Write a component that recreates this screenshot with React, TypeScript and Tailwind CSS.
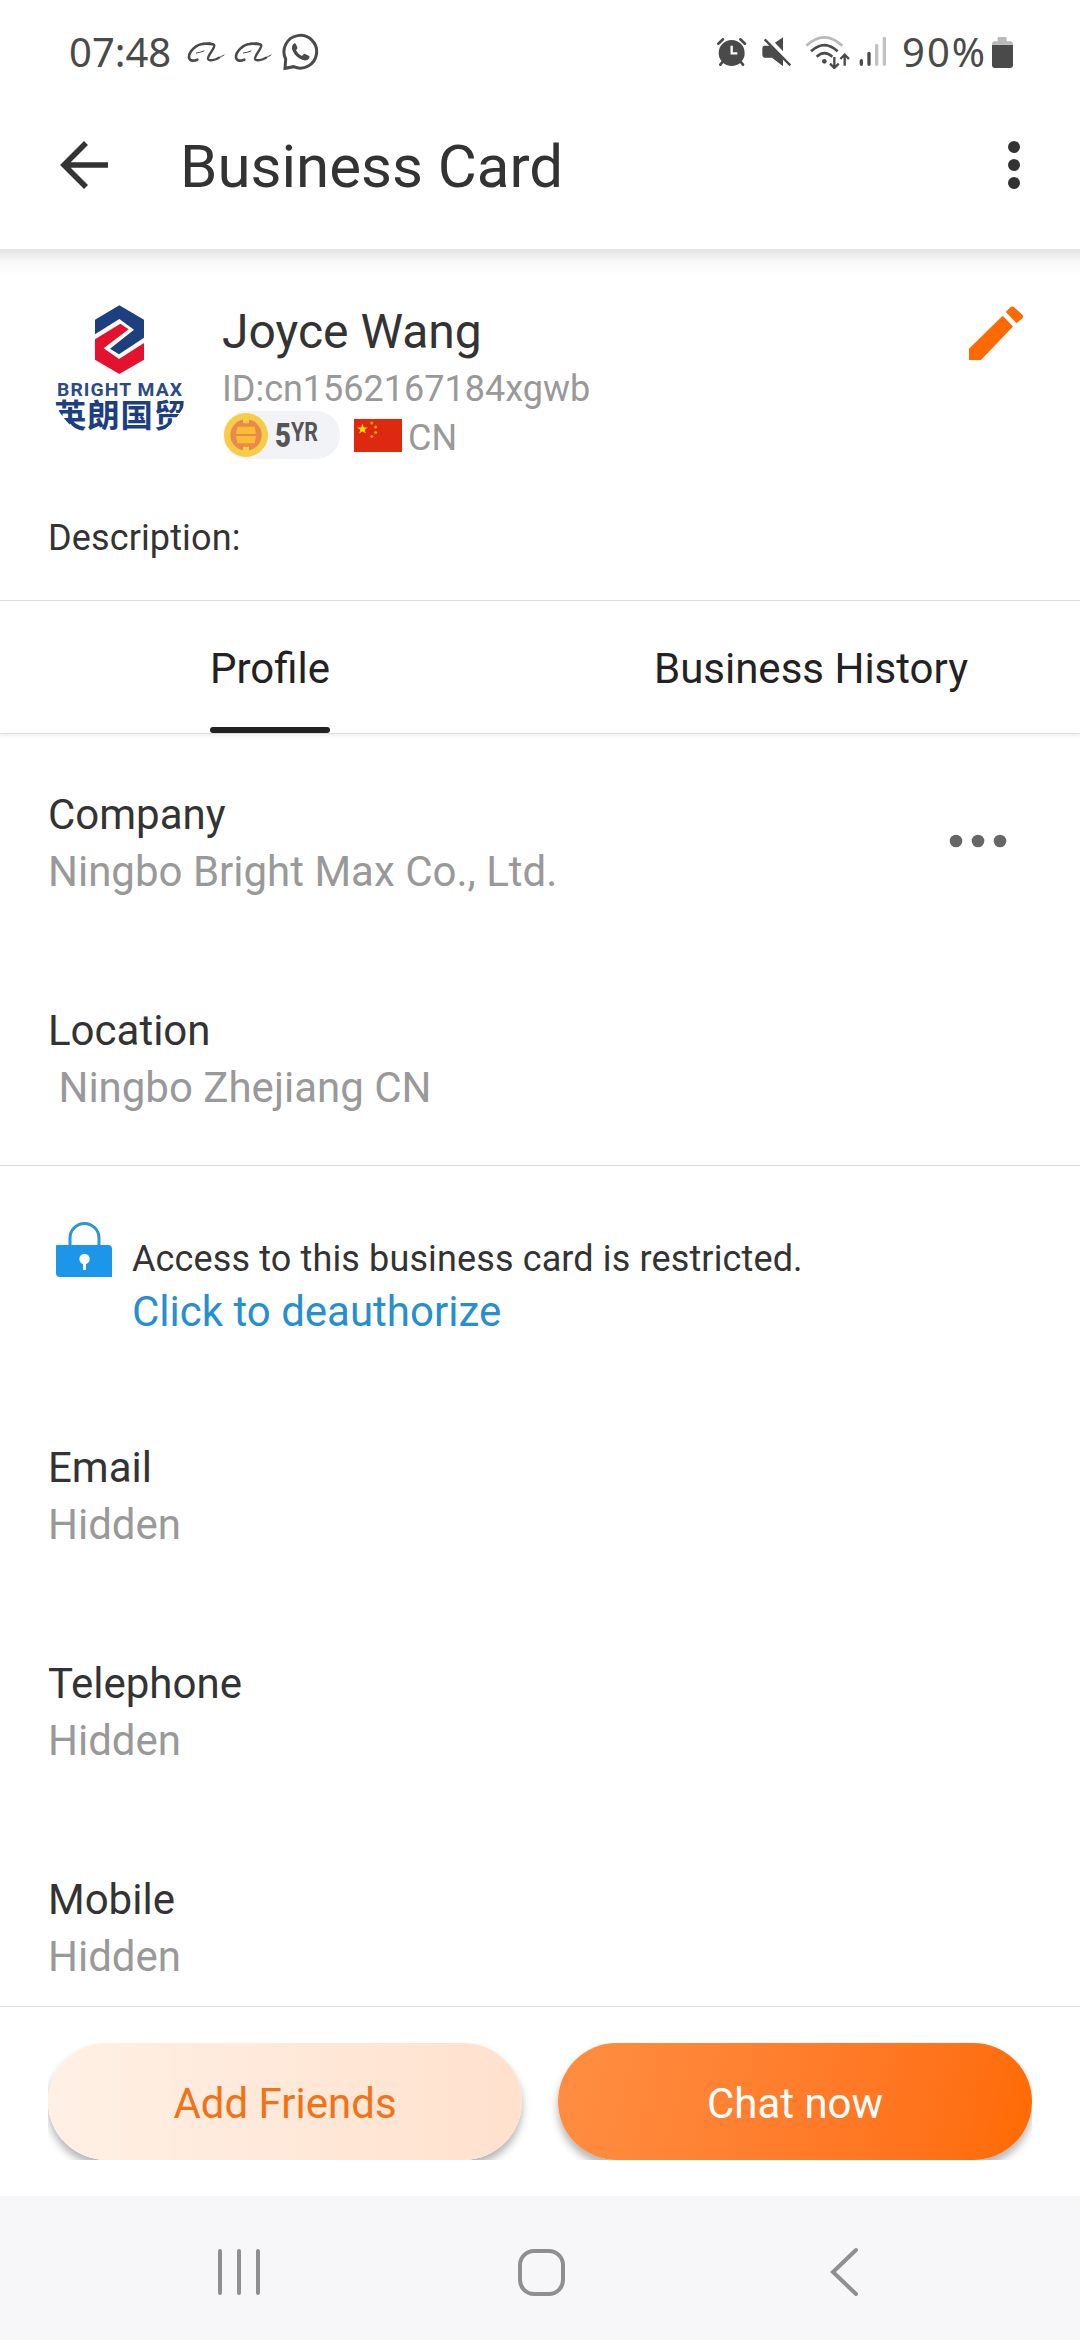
import type { ReactNode } from "react";

function ChatSwirl() {
  return (
    <svg viewBox="438 92 114 72" className="w-[38px] h-6" fill="none" stroke="#4a4a4a" strokeLinecap="round">
      <path d="M488 104C465 104 443 128 444 144C446 157 459 155 469 151" strokeWidth="8" />
      <path d="M487 103C508 106 518 101 520 108C521 118 500 138 501 148C503 157 524 151 534 145" strokeWidth="7" />
      <path d="M534 145Q542 141 549 137" strokeWidth="3" />
      <path d="M466 131C474 130 482 128 489 125" strokeWidth="3" />
      <path d="M487 103C500 98 514 101 520 107" strokeWidth="4" />
    </svg>
  );
}

function WhatsApp() {
  return (
    <svg viewBox="722 70 114 114" className="size-[38px]">
      <path
        d="M733 148A49 49 0 1 1 757 171L731 176Z"
        fill="none"
        stroke="#4a4a4a"
        strokeWidth="9"
        strokeLinejoin="miter"
      />
      <path
        d="M759 101q-8 5 -7 16q3 15 20 28q15 10 26 6q8 -4 6 -12l-14 -7q-3 0 -8 7q-12 -5 -18 -17q5 -5 4 -9l-5 -11q-1 -2 -4 -1z"
        fill="#4a4a4a"
      />
    </svg>
  );
}

function StatusBar() {
  return (
    <div className="h-[104px] flex items-center justify-between pl-[69px] pr-[67px] font-['Noto_Sans'] text-[40px] leading-[52px] text-[#4a4a4a]">
      <div className="flex items-center">
        <span className="mr-4">07:48</span>
        <ChatSwirl />
        <span className="w-[9px]" />
        <ChatSwirl />
        <span className="w-[10px]" />
        <WhatsApp />
      </div>
      <div className="flex items-center">
        <svg viewBox="75 78 96 96" className="size-8 mr-[13px]" fill="none" stroke="#4a4a4a" strokeLinecap="round">
          <circle cx="122" cy="129" r="39" fill="#4a4a4a" stroke="none" />
          <path d="M82 101L96 88M148 88L162 101" strokeWidth="8" />
          <path d="M97 153L88 164M147 153L156 164" strokeWidth="8" />
          <path d="M122 107V130H139" stroke="#fff" strokeWidth="7" strokeLinecap="butt" />
        </svg>
        <svg viewBox="210 78 96 96" className="size-8 mr-3" fill="#4a4a4a">
          <path d="M252 98L276 82V124Z" />
          <path d="M220 107H236L276 145V169L243 143H222Q214 142 214 134V115Q214 108 220 107Z" />
          <path d="M221 88L298 166" stroke="#4a4a4a" strokeWidth="7" />
        </svg>
        <svg viewBox="342 72 138 102" className="w-[46px] h-[34px] mr-[7px]" fill="none" strokeWidth="8">
          <path d="M346 104Q400 54 454 104" stroke="#b9b9b9" />
          <path d="M360 121Q400 84 440 121" stroke="#4a4a4a" />
          <path d="M377 137Q400 116 424 137" stroke="#4a4a4a" />
          <circle cx="400" cy="151" r="7" fill="#4a4a4a" />
          <path d="M430 138V170M417 158L430 171L443 158" stroke="#4a4a4a" strokeWidth="7" />
          <path d="M461 164V132M448 144L461 131L474 144" stroke="#4a4a4a" strokeWidth="7" />
        </svg>
        <svg viewBox="500 78 90 96" className="w-[30px] h-8 mr-[14px]" fill="none" strokeWidth="10" strokeLinecap="round">
          <path d="M510 152V163M533 130V163" stroke="#4a4a4a" />
          <path d="M556 106V163M579 85V163" stroke="#c2c2c2" />
        </svg>
        <span className="tracking-[2px] mr-[5px]">90%</span>
        <svg viewBox="903 75 63 99" className="w-[21px] h-[33px]">
          <path d="M920 80Q920 78 923 78H944Q947 78 947 81V91H960Q966 92 966 100H903Q903 92 909 91H920Z" fill="#b9b9b9" />
          <path d="M903 101H966V162Q966 171 957 171H912Q903 171 903 162Z" fill="#4a4a4a" />
        </svg>
      </div>
    </div>
  );
}

function Header() {
  return (
    <div className="h-[145px] flex items-start pl-[60px] pr-[60px] bg-white">
      <svg viewBox="0 0 48 48" className="size-12 mt-[37px]" fill="none" stroke="#333" strokeWidth="5.6">
        <path d="M26 2L4 24L26 46M4 24H48" />
      </svg>
      <h1 className="ml-[72px] mt-[28px] text-[60px] leading-[70px] text-[#333]">Business Card</h1>
      <svg viewBox="0 0 12 48" className="ml-auto w-3 h-12 mt-[37px]" fill="#333">
        <circle cx="6" cy="6" r="6" />
        <circle cx="6" cy="24" r="6" />
        <circle cx="6" cy="42" r="6" />
      </svg>
    </div>
  );
}

function CompanyLogo() {
  return (
    <svg viewBox="54 64 432 432" className="size-36">
      <clipPath id="avatar">
        <circle cx="270" cy="280" r="216" />
      </clipPath>
      <g clipPath="url(#avatar)">
        <path d="M195 120L268 77L342 120V174L267 224L240 207L312 150L268 118L195 164Z" fill="#1d3f80" />
        <path d="M195 179L271 132L296 149L221 206L267 238L342 190V240L268 283L195 240Z" fill="#e4122f" />
        <text
          x="81"
          y="348"
          textLength="378"
          lengthAdjust="spacingAndGlyphs"
          fontSize="55"
          fontWeight="700"
          fill="#2a4a88"
          fontFamily="Roboto, sans-serif"
          letterSpacing="3"
        >
          BRIGHT MAX
        </text>
        <text
          x="72"
          y="443"
          textLength="396"
          fontSize="97"
          fontWeight="700"
          fill="#1d3f80"
          fontFamily="Noto Sans CJK SC, sans-serif"
        >
          英朗国贸
        </text>
      </g>
    </svg>
  );
}

function YearBadge() {
  return (
    <div className="w-[117px] h-12 rounded-full bg-[#f2f3f7] flex items-center pl-[1px]">
      <svg viewBox="0 0 132 132" className="size-11">
        <circle cx="66" cy="66" r="66" fill="#f8cc45" />
        <circle cx="66" cy="66" r="47" fill="#e98850" />
        <path d="M57 16H75V31H57ZM57 101H75V116H57Z" fill="#f8cc45" />
        <path d="M40 41H92L96 63H36ZM36 69H96L92 91H40Z" fill="#f9bd33" />
        <path d="M28 66H104" stroke="#e98850" strokeWidth="5" />
      </svg>
      <svg viewBox="0 -6 48 48" className="size-12 ml-[7px]" fill="#555" fontFamily="Roboto, sans-serif" fontWeight="900">
        <text x="0" y="30" fontSize="33" textLength="16" lengthAdjust="spacingAndGlyphs">5</text>
        <text x="16" y="24" fontSize="25" fontWeight="700" textLength="27" lengthAdjust="spacingAndGlyphs">YR</text>
      </svg>
    </div>
  );
}

function ChinaFlag() {
  return (
    <svg viewBox="0 0 48 33" className="w-12 h-[33px]">
      <rect width="48" height="33" fill="#de2910" />
      <path
        d="M8.5 4.6L9.8 8.4H13.8L10.6 10.8L11.8 14.6L8.5 12.3L5.2 14.6L6.4 10.8L3.2 8.4H7.2Z"
        fill="#ffde00"
      />
      <g fill="#f0a010">
        <circle cx="17.8" cy="4" r="1.5" />
        <circle cx="21.6" cy="8" r="1.5" />
        <circle cx="21.6" cy="13.4" r="1.5" />
        <circle cx="17.8" cy="17.6" r="1.5" />
      </g>
    </svg>
  );
}

function PersonSummary() {
  return (
    <div className="h-[351px] pt-[52px] px-12 bg-linear-to-b from-[#e2e2e2] via-[#f8f8f8] via-[12px] to-white to-[27px]">
      <div className="flex items-start">
        <CompanyLogo />
        <div className="ml-[30px] mt-[3px]">
          <h2 className="text-[48px] leading-[56px] text-[#333]">Joyce Wang</h2>
          <p className="mt-2 text-[36px] leading-[42px] text-[#999]">ID:cn1562167184xgwb</p>
          <div className="mt-[1px] flex items-center ml-[1px]">
            <YearBadge />
            <span className="ml-[14px]">
              <ChinaFlag />
            </span>
            <span className="ml-[6px] mt-[6px] text-[36px] leading-[42px] text-[#999]">CN</span>
          </div>
        </div>
        <svg viewBox="0 0 60 60" className="ml-auto mr-[6px] mt-[2px] size-[60px]" fill="#ff6a00">
          <path d="M3 57V45.7L36.7 12.7L47 23.5L15 57Z" />
          <path d="M39.8 9L44.2 4.4Q46.3 2.4 48.4 4.4L56 11.6Q58 13.4 56.2 15.4L50.6 20.2Z" />
        </svg>
      </div>
      <p className="mt-[58px] text-[36px] leading-[42px] tracking-[0.13px] text-[#333]">Description:</p>
    </div>
  );
}

function Tabs() {
  return (
    <div className="h-[134px] grid grid-cols-2 border-y border-[#dcdcdc] shadow-[0_2px_3px_rgba(0,0,0,0.06)] text-[42px] leading-[49px] text-[#222]">
      <div className="flex flex-col items-center justify-between pt-[43px]">
        <span>Profile</span>
        <span className="w-[120px] h-[6px] rounded-[3px] bg-[#222]" />
      </div>
      <div className="pt-[43px] text-center pl-[2px]">Business History</div>
    </div>
  );
}

function Field({ label, children }: { label: string; children: ReactNode }) {
  return (
    <div className="h-[216px] text-[42px] leading-[49px]">
      <p className="text-[#333]">{label}</p>
      <p className="mt-2 text-[#999] whitespace-pre">{children}</p>
    </div>
  );
}

function Restricted() {
  return (
    <div className="flex items-start pl-2">
      <svg viewBox="0 0 56 56" className="size-14">
        <path d="M14 26V16A14.2 14.2 0 0 1 43 16V26" fill="none" stroke="#2c94d8" strokeWidth="3" />
        <path d="M0 24Q0 23 1 23H52Q56 23 56 27V55H4Q0 55 0 51Z" fill="#1b96e8" />
        <circle cx="28.5" cy="37" r="5.2" fill="#fff" />
        <path d="M27 40H30V48H27Z" fill="#fff" />
      </svg>
      <div className="ml-5 mt-[16px]">
        <p className="text-[36px] leading-[42px] tracking-[0.13px] text-[#333]">
          Access to this business card is restricted.
        </p>
        <p className="mt-[7px] text-[42px] leading-[49px] text-[#268fcf]">Click to deauthorize</p>
      </div>
    </div>
  );
}

function Actions() {
  return (
    <div className="h-[190px] pt-9 px-12 border-t border-[#dcdcdc] bg-white">
      {/* the row clips the pill shadows at its lower edge */}
      <div className="h-[117px] flex gap-9 overflow-hidden text-[42px] leading-[49px]">
        <button className="flex-1 pt-1 rounded-full bg-linear-to-r from-[#fff0e5] to-[#ffe1cd] text-[#f27216] shadow-[0_6px_8px_rgba(0,0,0,0.3)]">
          Add Friends
        </button>
        <button className="flex-1 pt-1 rounded-full bg-linear-105 from-[#ff8e42] to-[#ff6a00] text-white shadow-[0_6px_8px_rgba(0,0,0,0.3)]">
          Chat now
        </button>
      </div>
    </div>
  );
}

function NavBar() {
  return (
    <div className="h-36 bg-[#f7f7f9] flex items-start pt-[51px] pl-[217px]">
      <svg viewBox="0 0 44 50" className="w-11 h-[50px]" stroke="#8f8f8f" strokeWidth="4" strokeLinecap="round">
        <path d="M3 4V46M22 4V46M41 4V46" />
      </svg>
      <svg viewBox="0 0 50 50" className="ml-[255px] size-[50px]" fill="none" stroke="#8f8f8f" strokeWidth="4">
        <rect x="4" y="4" width="43" height="43" rx="14" />
      </svg>
      <svg
        viewBox="0 0 30 50"
        className="ml-[263px] w-[30px] h-[50px]"
        fill="none"
        stroke="#8f8f8f"
        strokeWidth="4"
        strokeLinecap="round"
      >
        <path d="M27 3L4 25L27 47" />
      </svg>
    </div>
  );
}

export default function App() {
  return (
    <div className="w-[1080px] h-[2340px] flex flex-col bg-white overflow-hidden font-[Roboto,'Noto_Sans',sans-serif]">
      <StatusBar />
      <Header />
      <PersonSummary />
      <Tabs />
      <div className="h-[431px] px-12 pt-[56px] flex justify-between">
        <div>
          <Field label="Company">Ningbo Bright Max Co., Ltd.</Field>
          <Field label="Location">{" Ningbo Zhejiang CN"}</Field>
        </div>
        <svg viewBox="0 0 60 14" className="mr-[24px] mt-[44px] w-[60px] h-[14px]" fill="#666">
          <circle cx="8" cy="7" r="6.3" />
          <circle cx="30" cy="7" r="6.3" />
          <circle cx="52" cy="7" r="6.3" />
        </svg>
      </div>
      <div className="h-[841px] px-12 pt-[56px] border-t border-[#dcdcdc] overflow-hidden">
        <Restricted />
        <div className="mt-[107px]">
          <Field label="Email">Hidden</Field>
          <Field label="Telephone">Hidden</Field>
          <Field label="Mobile">Hidden</Field>
        </div>
      </div>
      <Actions />
      <NavBar />
    </div>
  );
}
